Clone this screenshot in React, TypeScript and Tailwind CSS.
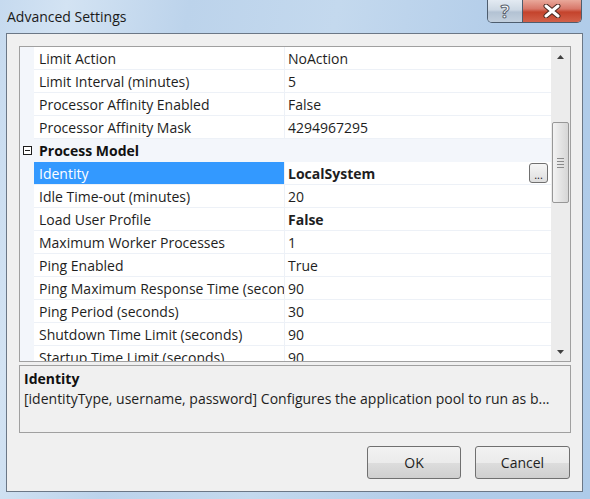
import React from "react";

type Row =
  | { kind: "cat"; label: string }
  | { kind: "prop"; label: string; value: string; selected?: boolean; bold?: boolean; button?: boolean };

const rows: Row[] = [
  { kind: "prop", label: "Limit Action", value: "NoAction" },
  { kind: "prop", label: "Limit Interval (minutes)", value: "5" },
  { kind: "prop", label: "Processor Affinity Enabled", value: "False" },
  { kind: "prop", label: "Processor Affinity Mask", value: "4294967295" },
  { kind: "cat", label: "Process Model" },
  { kind: "prop", label: "Identity", value: "LocalSystem", selected: true, bold: true, button: true },
  { kind: "prop", label: "Idle Time-out (minutes)", value: "20" },
  { kind: "prop", label: "Load User Profile", value: "False", bold: true },
  { kind: "prop", label: "Maximum Worker Processes", value: "1" },
  { kind: "prop", label: "Ping Enabled", value: "True" },
  { kind: "prop", label: "Ping Maximum Response Time (seconds)", value: "90" },
  { kind: "prop", label: "Ping Period (seconds)", value: "30" },
  { kind: "prop", label: "Shutdown Time Limit (seconds)", value: "90" },
  { kind: "prop", label: "Startup Time Limit (seconds)", value: "90" },
];

const font = "font-['Segoe_UI','Open_Sans',sans-serif]";

function GridRow({ row }: { row: Row }) {
  if (row.kind === "cat") {
    return (
      <div className="flex h-[23px] shrink-0 items-center bg-[#f3f6fb]">
        <div className="flex w-[14px] shrink-0 justify-center">
          <div className="relative h-[9px] w-[9px] border border-[#1e1e1e] bg-white">
            <div className="absolute left-[1px] top-[3px] h-[1px] w-[5px] bg-[#1e1e1e]" />
          </div>
        </div>
        <div className="pl-[5px] pt-[1px] text-[14px] font-bold leading-none text-[#111]">{row.label}</div>
      </div>
    );
  }
  return (
    <div className="flex h-[23px] shrink-0">
      <div className="w-[14px] shrink-0 bg-[#f3f6fb]" />
      <div
        className={`flex w-[250px] shrink-0 items-center overflow-hidden whitespace-nowrap border-b border-[#edf1f7] pl-[5px] pt-[1px] text-[14px] leading-none ${
          row.selected ? "bg-[#3399ff] text-white" : "bg-white text-[#1e1e1e]"
        }`}
      >
        {row.label}
      </div>
      <div className="w-[1px] shrink-0 bg-[#edf1f7]" />
      <div className="flex flex-1 items-center justify-between border-b border-[#edf1f7] bg-white pl-[3px] pr-[3px]">
        <span className={`pt-[1px] text-[14px] leading-none text-[#1e1e1e] ${row.bold ? "font-bold" : ""}`}>{row.value}</span>
        {row.button && (
          <div className="flex h-[20px] w-[19px] items-end justify-center rounded-[3px] border border-[#707070] bg-[linear-gradient(180deg,#f6f6f6,#dedede)] pb-[2px] text-[11px] leading-none text-[#222]">
            ...
          </div>
        )}
      </div>
    </div>
  );
}

function ScrollBar() {
  return (
    <div className="flex w-[19px] shrink-0 flex-col bg-[#ececec]">
      <div className="flex h-[19px] shrink-0 items-center justify-center">
        <svg width="7" height="4" viewBox="0 0 7 4">
          <path d="M3.5 0 L7 4 L0 4 Z" fill="#404040" />
        </svg>
      </div>
      <div className="h-[56px] shrink-0" />
      <div className="mx-auto flex h-[81px] w-[17px] shrink-0 items-center justify-center rounded-[2px] border border-[#979797] bg-[linear-gradient(90deg,#f3f3f3,#e4e4e4_50%,#d6d6d6)]">
        <div className="flex flex-col gap-[2px]">
          <div className="h-[1px] w-[7px] bg-[#8a8a8a]" />
          <div className="h-[1px] w-[7px] bg-[#8a8a8a]" />
          <div className="h-[1px] w-[7px] bg-[#8a8a8a]" />
          <div className="h-[1px] w-[7px] bg-[#8a8a8a]" />
        </div>
      </div>
      <div className="flex-1" />
      <div className="flex h-[19px] shrink-0 items-center justify-center">
        <svg width="7" height="4" viewBox="0 0 7 4">
          <path d="M0 0 L7 0 L3.5 4 Z" fill="#404040" />
        </svg>
      </div>
    </div>
  );
}

function Button({ label, w }: { label: string; w: string }) {
  return (
    <div
      className={`flex h-[33px] ${w} items-center justify-center rounded-[3px] border border-[#707070] bg-[linear-gradient(180deg,#f2f2f2_0%,#ebebeb_50%,#dddddd_51%,#cfcfcf_100%)] text-[14px] text-[#1e1e1e]`}
    >
      {label}
    </div>
  );
}

export default function App() {
  return (
    <div
      className={`${font} flex h-[499px] w-[590px] flex-col overflow-hidden bg-[linear-gradient(100deg,#c6daef_0%,#d3e3f3_10%,#bcd3eb_28%,#c4d9ee_50%,#b3cde9_75%,#aecbe9_100%)]`}
    >
      {/* Title bar */}
      <div className="flex h-[33px] shrink-0 items-start">
        <div className="pl-[7px] pt-[7px] text-[14px] leading-[20px] text-[#1a1a1a]">Advanced Settings</div>
        <div className="ml-auto mr-[8px] flex h-[23px] overflow-hidden rounded-b-[5px] border border-t-0 border-[#4e5d6e]">
          <div className="flex w-[35px] items-center justify-center border-r border-[#4e5d6e] bg-[linear-gradient(180deg,#e3eaf2_0%,#cdd8e4_45%,#b3c2d3_55%,#c3d0de_100%)]">
            <span className="text-[18px] font-bold leading-none text-white [-webkit-text-stroke:1px_#5a6470]">?</span>
          </div>
          <div className="flex w-[58px] items-center justify-center bg-[linear-gradient(180deg,#e9a89a_0%,#d8786a_40%,#c4432c_55%,#d2614a_100%)]">
            <svg width="18" height="14" viewBox="0 0 18 14">
              <path d="M3 2 L15 12 M15 2 L3 12" stroke="#4a2a22" strokeWidth="5" strokeLinecap="round" />
              <path d="M3 2 L15 12 M15 2 L3 12" stroke="#ffffff" strokeWidth="3" strokeLinecap="round" />
            </svg>
          </div>
        </div>
      </div>

      {/* Client */}
      <div className="ml-[6px] mr-[7px] flex h-[459px] shrink-0 flex-col border border-[#6b7786] bg-[#f0f0f0] px-[12px] pt-[12px]">
        {/* Property grid */}
        <div className="flex h-[316px] w-[552px] shrink-0 border border-[#a0a0a0] bg-white">
          <div className="flex flex-1 flex-col overflow-hidden">
            {rows.map((r, i) => (
              <GridRow key={i} row={r} />
            ))}
          </div>
          <ScrollBar />
        </div>

        {/* Help panel */}
        <div className="mt-[3px] flex h-[68px] w-[552px] shrink-0 flex-col overflow-hidden border border-[#a0a0a0] bg-[#f0f0f0] pl-[4px] pt-[3px]">
          <div className="text-[14px] font-bold leading-[20px] text-[#111]">Identity</div>
          <div className="whitespace-nowrap text-[14px] leading-[20px] text-[#1e1e1e]">
            [identityType, username, password] Configures the application pool to run as b...
          </div>
        </div>

        {/* Buttons */}
        <div className="mt-[13px] flex w-[551px] justify-end gap-[14px]">
          <Button label="OK" w="w-[94px]" />
          <Button label="Cancel" w="w-[95px]" />
        </div>
      </div>
    </div>
  );
}
